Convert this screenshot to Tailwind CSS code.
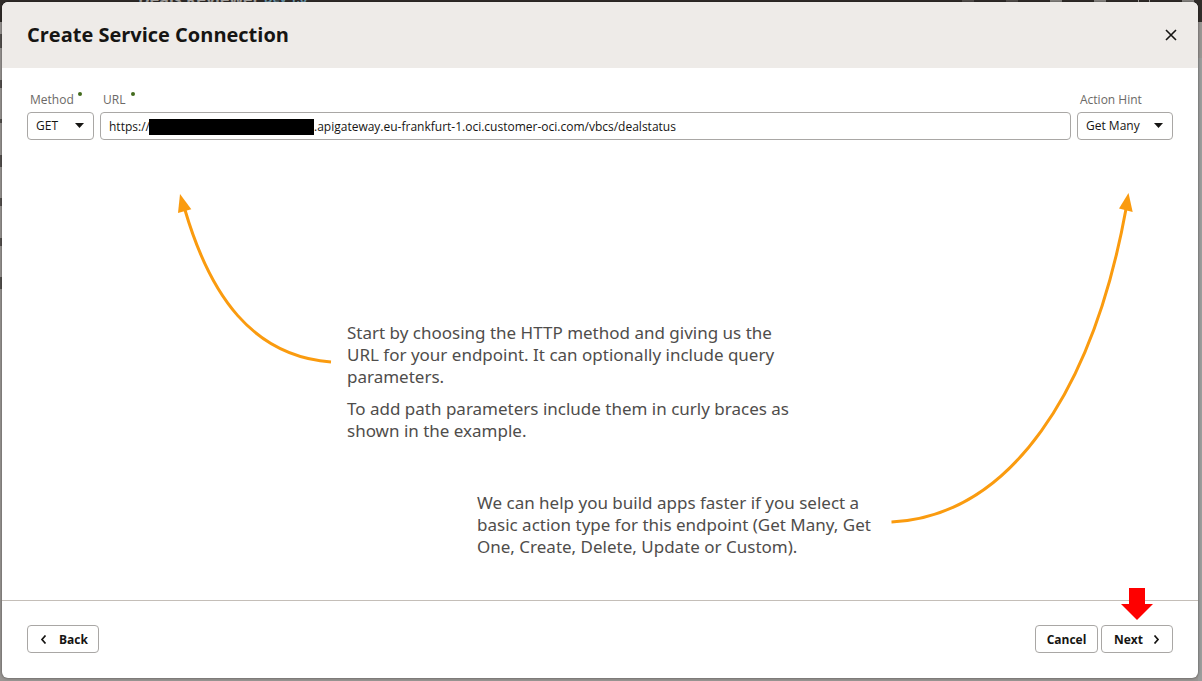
<!DOCTYPE html>
<html lang="en">
<head>
<meta charset="utf-8">
<title>Create Service Connection</title>
<script src="https://cdn.jsdelivr.net/npm/@tailwindcss/browser@4"></script>
</head>
<body class="relative flex min-h-screen flex-col overflow-x-hidden bg-[#999693] pt-[2px] pr-[4px] pb-[3px] pl-[2px] font-['Open_Sans','Noto_Sans',sans-serif] text-[#161513]">

<!-- dimmed page behind the dialog -->
<div class="absolute inset-x-0 top-0 flex h-[22px] items-start justify-between bg-[#312d2a] pr-2 pl-[138px]" aria-hidden="true">
  <div class="-mt-[9px] flex items-center gap-1 text-base leading-4 font-bold text-[#aaa8a6]">
    <span>Deals Reviewer</span><span class="text-xs leading-4 text-[#6f9fb5]">Dev 1.0</span>
  </div>
  <div class="flex gap-8">
    <i class="h-[2px] w-3 bg-[#55514e]"></i><i class="h-[2px] w-3 bg-[#55514e]"></i><i class="h-[2px] w-3 bg-[#8b8885]"></i><i class="h-[2px] w-3 bg-[#8b8885]"></i><i class="h-[2px] w-3 border-x border-[#aaa8a6]"></i><i class="h-[2px] w-3 bg-[#8b8885]"></i>
  </div>
</div>
<div class="absolute top-[58px] right-0 bottom-0 w-1 bg-[#9b9d9c]"></div>
<div class="absolute top-[34px] bottom-[392px] left-0 flex w-[2px] flex-col justify-between" aria-hidden="true">
  <i class="h-[14px] bg-[#55524f]"></i><i class="h-2 bg-[#55524f]"></i><i class="h-1 bg-[#55524f]"></i><i class="h-3 bg-[#55524f]"></i><i class="h-2 bg-[#55524f]"></i><i class="h-2 bg-[#55524f]"></i><i class="h-3 bg-[#55524f]"></i>
</div>

<div role="dialog" aria-labelledby="title" class="relative flex flex-1 flex-col overflow-hidden rounded-md bg-white shadow-[0_0_3px_rgba(0,0,0,0.5)]">
  <header class="flex h-[66px] items-center justify-between bg-[#eeebe8] pr-[19px] pl-[25px]">
    <h1 id="title" class="text-xl leading-6 font-bold">Create Service Connection</h1>
    <button type="button" aria-label="Close" class="p-[2px]">
      <svg class="size-3" viewBox="0 0 12 12" fill="none" stroke="#161513" stroke-width="1.6"><path d="M1 1l10 10M11 1L1 11"/></svg>
    </button>
  </header>

  <main class="flex flex-1 flex-col px-[25px] pt-[22px]">
    <div class="flex gap-[6px] text-xs">
      <div class="w-[67px]">
        <label for="method" class="flex h-[22px] gap-1 pl-[3px] leading-[20px] text-[#6b6966]">Method<span class="mt-[2px] size-1 rounded-full bg-[#436b1d]"></span></label>
        <div class="relative">
          <select id="method" class="h-7 w-full appearance-none rounded border border-[#a9a7a5] bg-white pl-2 text-xs"><option>GET</option><option>POST</option></select>
          <svg class="pointer-events-none absolute top-[11px] right-[10px] h-[5px] w-[9px]" viewBox="0 0 9 5"><path d="M0 0h9L4.500 5z" fill="#161513"/></svg>
        </div>
      </div>
      <div class="min-w-0 flex-1">
        <label for="url" class="flex h-[22px] gap-[6px] pl-[3px] leading-[20px] text-[#6b6966]">URL<span class="mt-[2px] size-1 rounded-full bg-[#436b1d]"></span></label>
        <div class="flex h-7 items-center rounded border border-[#a9a7a5] pt-[2px] pl-2">
          <span class="w-10">https://</span><span class="h-4 w-[165px] bg-black"></span>
          <input id="url" type="text" value=".apigateway.eu-frankfurt-1.oci.customer-oci.com/vbcs/dealstatus" class="min-w-0 flex-1 bg-transparent outline-none">
        </div>
      </div>
      <div class="w-24">
        <label for="hint" class="block h-[22px] pl-[3px] leading-[20px] text-[#6b6966]">Action Hint</label>
        <div class="relative">
          <select id="hint" class="h-7 w-full appearance-none rounded border border-[#a9a7a5] bg-white pl-2 text-xs"><option>Get Many</option><option>Get One</option><option>Create</option><option>Delete</option><option>Update</option><option>Custom</option></select>
          <svg class="pointer-events-none absolute top-[11px] right-[10px] h-[5px] w-[9px]" viewBox="0 0 9 5"><path d="M0 0h9L4.500 5z" fill="#161513"/></svg>
        </div>
      </div>
    </div>

    <div class="flex flex-1 items-start pt-[52px] pr-[39px] pl-[149px] font-['Noto_Sans','Open_Sans',sans-serif] text-[17px] leading-[22px] text-[#4f4d4b]">
      <svg class="h-[172px] w-[156px] shrink-0" viewBox="176 192 156 172" fill="none"><path d="M185 210C210 295 252 356 331 362" stroke="#fa9b0f" stroke-width="3"/><path d="M180 194L191.300 209.300L178 213z" fill="#fa9b0f"/></svg>
      <div class="pt-[130px] pl-[15px]">
        <div class="flex w-[460px] flex-col gap-[10px]">
          <p>Start by choosing the HTTP method and giving us the URL for your endpoint. It can optionally include query parameters.</p>
          <p>To add path parameters include them in curly braces as shown in the example.</p>
        </div>
        <p class="mt-[50px] ml-[130px] w-[410px]">We can help you build apps faster if you select a basic action type for this endpoint (Get Many, Get One, Create, Delete, Update or Custom).</p>
      </div>
      <svg class="ml-auto h-[332px] w-[243px] shrink-0" viewBox="891 192 243 332" fill="none"><path d="M891.500 522C1011 516 1093 390 1126 209" stroke="#fa9b0f" stroke-width="3"/><path d="M1128.500 193L1132.700 212L1119 208.500z" fill="#fa9b0f"/></svg>
    </div>
  </main>

  <footer class="flex items-center gap-[3px] border-t border-[#c4beb8] px-[25px] pt-6 pb-[25px] text-xs font-bold">
    <button type="button" class="flex h-7 w-[72px] items-center gap-3 rounded border border-[#a9a7a5] pt-px pl-3">
      <svg class="h-[9px] w-[7px]" viewBox="0 0 7 9" fill="none" stroke="#161513" stroke-width="1.700"><path d="M5.500 .5L2 4.500L5.500 8.500"/></svg>Back</button>
    <button type="button" class="ml-auto h-7 w-[63px] rounded border border-[#a9a7a5] pt-px">Cancel</button>
    <button type="button" class="relative flex h-7 w-[72px] items-center gap-[10px] rounded border border-[#a9a7a5] pt-px pl-3">Next
      <svg class="h-[9px] w-[7px]" viewBox="0 0 7 9" fill="none" stroke="#161513" stroke-width="1.700"><path d="M1.500 .5L5 4.500L1.500 8.500"/></svg>
      <svg class="absolute bottom-8 left-[19px] h-8 w-8" viewBox="0 0 32 32"><path d="M8 0h16v16h8L16 32L0 16h8z" fill="#fe0000"/></svg>
    </button>
  </footer>
</div>
</body>
</html>
